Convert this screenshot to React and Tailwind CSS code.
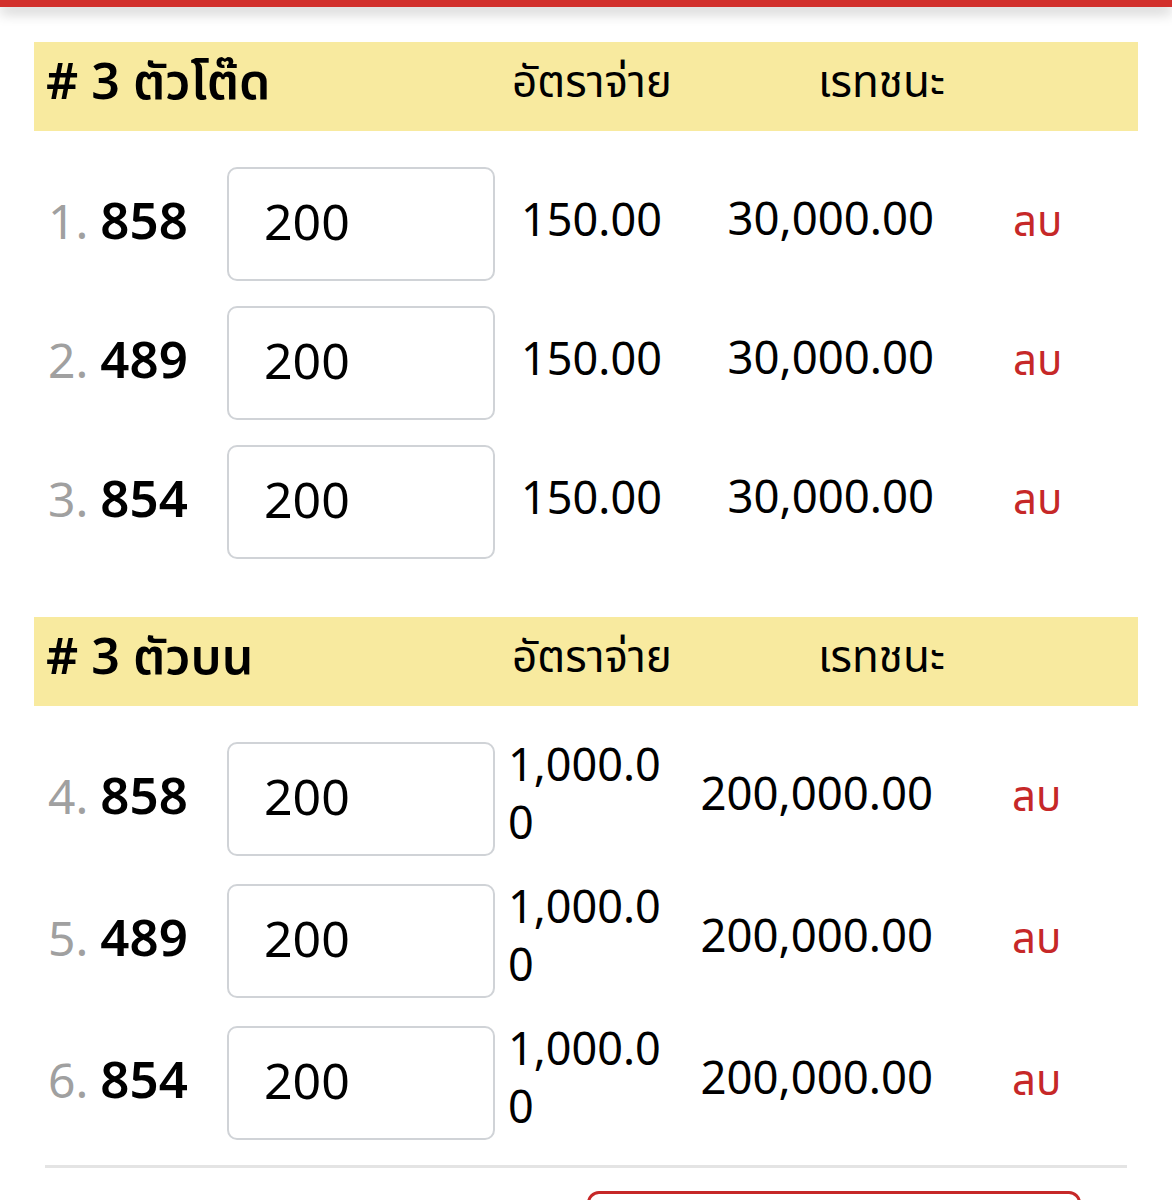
import React from "react";

const FONT = { fontFamily: '"Noto Sans", "Noto Sans Thai", "Noto Sans Thai UI", Loma, Garuda, "Tlwg Typo", sans-serif' };

const sections = [
  {
    title: "# 3 ตัวโต๊ด",
    wrap: false,
    rows: [
      { n: 1, num: "858", amt: "200", rate: "150.00", win: "30,000.00" },
      { n: 2, num: "489", amt: "200", rate: "150.00", win: "30,000.00" },
      { n: 3, num: "854", amt: "200", rate: "150.00", win: "30,000.00" },
    ],
  },
  {
    title: "# 3 ตัวบน",
    wrap: true,
    rows: [
      { n: 4, num: "858", amt: "200", rate: "1,000.00", win: "200,000.00" },
      { n: 5, num: "489", amt: "200", rate: "1,000.00", win: "200,000.00" },
      { n: 6, num: "854", amt: "200", rate: "1,000.00", win: "200,000.00" },
    ],
  },
];

function Header({ title }) {
  return (
    <div className="flex h-[89px] items-center bg-[#f8ea9f] pb-[14px] pl-[12px] leading-none text-black">
      <div className="w-[466px] text-[50px] font-semibold">{title}</div>
      <div className="w-[306px] text-[44px]">อัตราจ่าย</div>
      <div className="text-[44px]">เรทชนะ</div>
    </div>
  );
}

function Row({ row, wrap }) {
  return (
    <div className="flex h-[114px] items-center">
      <div className="flex w-[193px] items-baseline pb-[10px] pl-[14px] leading-none">
        <span className="text-[48px] text-[#a0a0a0]">{row.n}.</span>
        <span className="ml-[12px] text-[51px] font-semibold text-black">{row.num}</span>
      </div>
      <input
        readOnly
        value={row.amt}
        className="h-[114px] w-[268px] rounded-[10px] border-[2.5px] border-[#d0d3d7] bg-white pb-[6px] pl-[35px] text-[50px] text-black outline-none"
        style={FONT}
      />
      {wrap ? (
        <div className="ml-[13px] w-[165px] break-all pb-[12px] pr-[10px] text-left text-[45px] leading-[58px] text-black">
          {row.rate}
        </div>
      ) : (
        <div className="ml-[14px] w-[165px] pb-[12px] text-center text-[45px] leading-none text-black">
          {row.rate}
        </div>
      )}
      <div className="w-[260px] shrink-0 pb-[12px] text-right text-[45.5px] leading-none text-black">
        {row.win}
      </div>
      <div className="ml-[79px] pb-[8px] text-[42px] leading-none text-[#c62828]">ลบ</div>
    </div>
  );
}

export default function App() {
  return (
    <div className="h-[1200px] overflow-hidden bg-white" style={FONT}>
      <div className="h-[7px] bg-[#d2302c] shadow-[0_5px_14px_rgba(0,0,0,0.28)]" />
      <div className="px-[34px] pt-[35px]">
        <Header title={sections[0].title} />
        <div className="flex flex-col gap-[25px] pt-[36px]">
          {sections[0].rows.map((r) => (
            <Row key={r.n} row={r} wrap={false} />
          ))}
        </div>
        <div className="mt-[58px]">
          <Header title={sections[1].title} />
        </div>
        <div className="flex flex-col gap-[28px] pt-[36px]">
          {sections[1].rows.map((r) => (
            <Row key={r.n} row={r} wrap />
          ))}
        </div>
        <div className="mx-[11px] mt-[25px] h-[3px] bg-[#e4e4e4]" />
        <div className="flex justify-end pr-[57px] pt-[23px]">
          <button className="h-[70px] w-[494px] rounded-[12px] border-[3px] border-[#c62828] bg-white" />
        </div>
      </div>
    </div>
  );
}
